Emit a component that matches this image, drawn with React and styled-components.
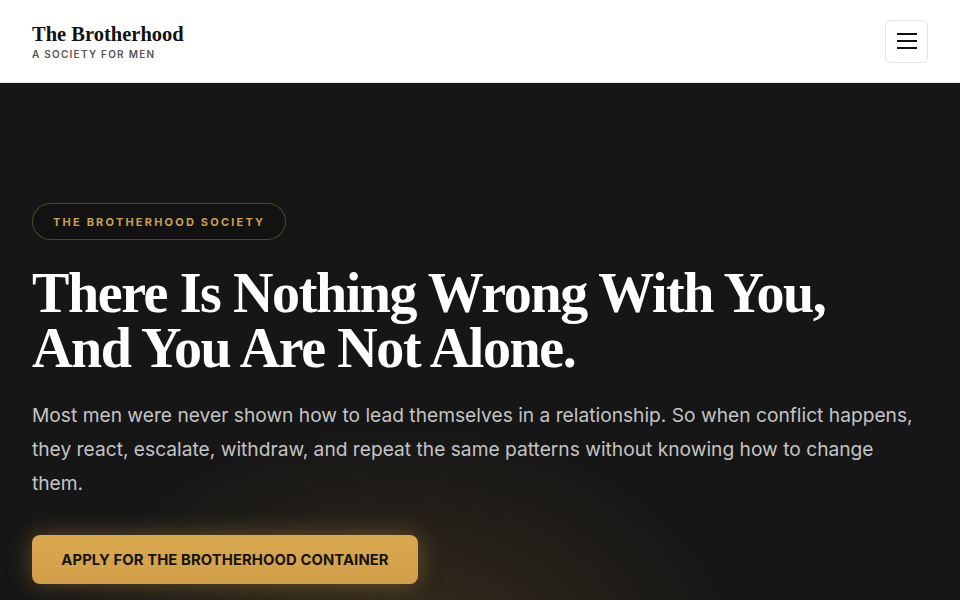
import React from "react";
import styled, { createGlobalStyle } from "styled-components";

const Global = createGlobalStyle`
  * { box-sizing: border-box; }
  html, body { margin: 0; padding: 0; background: #161616; }
  body { font-family: Inter, "Noto Sans", sans-serif; -webkit-font-smoothing: antialiased; }
`;

const Page = styled.div`
  width: 960px;
  height: 600px;
  overflow: hidden;
  display: flex;
  flex-direction: column;
`;

const Header = styled.header`
  height: 83px;
  flex: none;
  background: #ffffff;
  border-bottom: 1px solid #e6e6e6;
  display: flex;
  align-items: center;
  justify-content: space-between;
  padding: 0 32px;
`;

const Brand = styled.div`
  display: flex;
  flex-direction: column;
  gap: 3px;
  margin-top: 1px;
`;

const BrandName = styled.div`
  font-family: "Liberation Serif", "DejaVu Serif", serif;
  font-weight: 700;
  font-size: 20.5px;
  line-height: 22px;
  color: #111111;
`;

const BrandTag = styled.div`
  font-size: 10px;
  line-height: 12px;
  font-weight: 600;
  letter-spacing: 1.25px;
  color: #555555;
  text-transform: uppercase;
`;

const MenuButton = styled.button`
  width: 43px;
  height: 43px;
  border: 1px solid #e4e4e4;
  border-radius: 6px;
  background: #ffffff;
  display: flex;
  flex-direction: column;
  align-items: center;
  justify-content: center;
  gap: 5px;
  padding: 0;
`;

const MenuLine = styled.span`
  display: block;
  width: 20px;
  height: 2px;
  background: #111111;
`;

const Hero = styled.section`
  flex: 1;
  background:
    radial-gradient(ellipse 340px 240px at 400px 580px, rgba(165, 122, 50, 0.24), rgba(165, 122, 50, 0) 100%),
    #161616;
  padding: 120px 32px 0;
  display: flex;
  flex-direction: column;
  align-items: flex-start;
`;

const Badge = styled.div`
  height: 37px;
  padding: 0 20px;
  border: 1px solid rgba(201, 163, 79, 0.35);
  border-radius: 19px;
  display: flex;
  align-items: center;
  font-size: 11px;
  font-weight: 700;
  letter-spacing: 2.2px;
  color: #c9a14e;
  text-transform: uppercase;
  background: rgba(0, 0, 0, 0.15);
`;

const Title = styled.h1`
  margin: 26px 0 0;
  font-family: "Liberation Serif", "DejaVu Serif", serif;
  font-weight: 700;
  font-size: 56px;
  line-height: 55px;
  letter-spacing: -1.4px;
  color: #ffffff;
`;

const Lead = styled.p`
  margin: 22px 0 0;
  font-size: 19.2px;
  line-height: 34px;
  color: #c4c4c4;
  max-width: 900px;
`;

const Cta = styled.button`
  margin-top: 35px;
  height: 49px;
  width: 386px;
  border: none;
  border-radius: 8px;
  background: linear-gradient(180deg, #d8a84e, #d19f49);
  color: #141414;
  font-family: Inter, sans-serif;
  font-size: 14.8px;
  font-weight: 700;
  letter-spacing: 0.1px;
  text-transform: uppercase;
  box-shadow: 0 0 24px rgba(214, 164, 72, 0.38);
  cursor: pointer;
`;

export default function App() {
  return (
    <Page>
      <Global />
      <Header>
        <Brand>
          <BrandName>The Brotherhood</BrandName>
          <BrandTag>A Society for Men</BrandTag>
        </Brand>
        <MenuButton aria-label="Menu">
          <MenuLine />
          <MenuLine />
          <MenuLine />
        </MenuButton>
      </Header>
      <Hero>
        <Badge>The Brotherhood Society</Badge>
        <Title>
          There Is Nothing Wrong With You,
          <br />
          And You Are Not Alone.
        </Title>
        <Lead>
          Most men were never shown how to lead themselves in a relationship. So when conflict happens,
          they react, escalate, withdraw, and repeat the same patterns without knowing how to change
          them.
        </Lead>
        <Cta>Apply for the Brotherhood Container</Cta>
      </Hero>
    </Page>
  );
}
